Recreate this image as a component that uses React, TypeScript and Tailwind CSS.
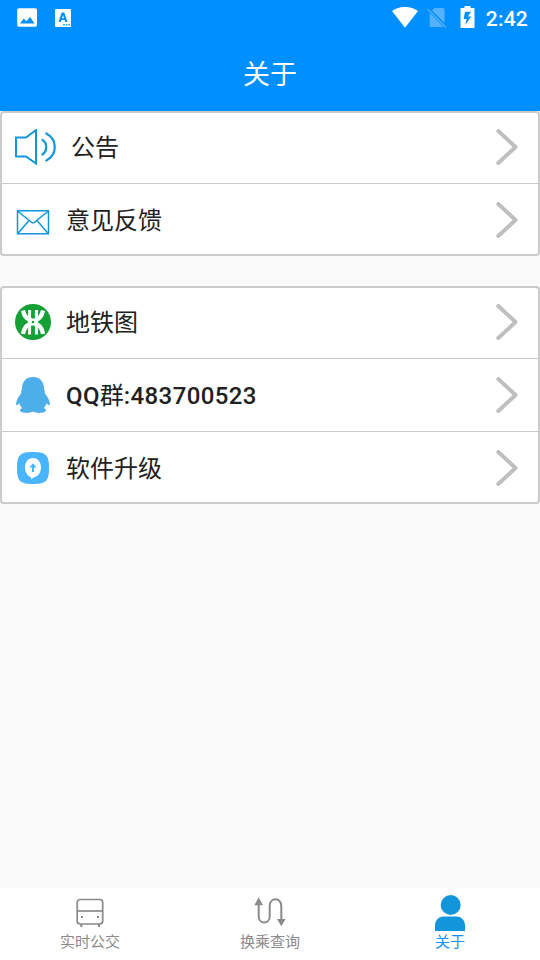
import type { ReactNode } from 'react';

function StatusBar() {
  return (
    <div className="flex h-9 items-center justify-between pr-3 pl-4 text-white">
      <div className="flex items-center gap-3.5">
        <svg className="size-[22px]" viewBox="0 0 22 22" fill="currentColor">
          <path
            fillRule="evenodd"
            d="M3 1.3h16.2a1.8 1.8 0 0 1 1.8 1.8v14.8a1.8 1.8 0 0 1-1.8 1.8H3a1.8 1.8 0 0 1-1.8-1.8V3.1A1.8 1.8 0 0 1 3 1.3ZM4 16.5h14.5l-4.5-6.6-3.6 4.4-2.6-2.8Z"
          />
        </svg>
        <svg className="size-[22px]" viewBox="0 0 22 22" fill="currentColor">
          <path
            fillRule="evenodd"
            d="M4 2h14a1 1 0 0 1 1 1v16a1 1 0 0 1-1 1H4a1 1 0 0 1-1-1V3a1 1 0 0 1 1-1ZM9.700 5.500 6.500 15h2.300l.6-1.900h3.200l.6 1.900h2.300l-3.200-9.500Zm1.300 2.600 1 3.200h-2ZM11.200 17h1.500v1.400h-1.500Zm2.700 0h1.400v1.400h-1.400Zm2.500 0h1.400v1.400h-1.400Z"
          />
        </svg>
      </div>
      <div className="flex items-center">
        <svg className="h-[22px] w-[26px]" viewBox="0 0 26 22" fill="currentColor">
          <path d="M13 20.800 0 4.100C7.500-1.500 18.500-1.500 26 4.100Z" />
        </svg>
        <svg className="ml-[9px] mb-0.5 h-[22px] w-5" viewBox="0 0 20 22">
          <path d="M7.500 2H16a1.500 1.500 0 0 1 1.500 1.500V17L5 4.500ZM2.700 7 16.500 21H2.700Z" fill="#55b0ff" />
          <path d="m.5 3 18.500 18.500" stroke="#55b0ff" strokeWidth="1.500" />
        </svg>
        <svg className="ml-[13px] mb-0.5 h-[22px] w-[15px]" viewBox="0 0 15 22" fill="currentColor">
          <path fillRule="evenodd" d="M4.500 0h6v2h3.200q.8 0 .8.8v18.400q0 .8-.8.8H1.300q-.8 0-.8-.8V2.800q0-.8.8-.8h3.200ZM5 5.700 3.600 13h3L5.200 19l6-8.500H8l3-4.800Z" />
        </svg>
        <span className="ml-[11px] pt-0.5 text-[21px] leading-[34px] font-medium tracking-[0.2px]">2:42</span>
      </div>
    </div>
  );
}

function SpeakerIcon() {
  return (
    <svg className="h-9 w-[41px]" viewBox="0 0 41 36" fill="none" stroke="#1296db" strokeWidth="2">
      <path d="M1 8.500h10L21 1v33.500l-10-7H1Z" />
      <path d="M27.500 11c5 3 5 11 0 14.500M31.300 4.500c11.300 6 11.300 21 0 27" strokeWidth="2.200" strokeLinecap="round" />
    </svg>
  );
}

function MailIcon() {
  return (
    <svg className="size-9" viewBox="0 0 36 36" fill="none" stroke="#1296db" strokeWidth="1.500">
      <path d="M2.500 8.700h31v23h-31Z" />
      <path d="m2.500 9 12.500 10c2 2.500 4 2.500 6 0l12.500-10M14 18.500l-11 12.700M22 18.500l11 12.700" />
    </svg>
  );
}

function MetroIcon() {
  return (
    <svg className="size-9" viewBox="0 0 36 36" fill="none" stroke="#fff">
      <circle cx="18" cy="18" r="18" fill="#15a035" stroke="none" />
      <path d="M8 6.500C9 12 12 16 18 16.800c6-.8 9-4.800 10-10.300M8 30C9 24 12 20 18 19.200c6 .8 9 4.800 10 10.800" strokeWidth="4.200" />
      <path d="M14.600 6v24.500M21.400 6v24.500" strokeWidth="3" />
      <path d="M18 16v4" strokeWidth="9" />
      <circle cx="18" cy="18" r="1.300" fill="#15a035" stroke="none" />
      <path d="M18 6v8M18 22v8.500" stroke="#15a035" strokeWidth="2.200" />
    </svg>
  );
}

function QQIcon() {
  return (
    <svg className="size-9" viewBox="0 0 36 36" fill="#4daeea">
      <path d="M18 0C11 0 7 4.800 7 11.500c0 1-.8 1.700-.8 3 0 .8.1 1.200.2 1.500C3.300 19.800.7 24.300 1.200 27.500c.4 1.500 1.800.2 3-1.300.7 1.700 1.600 3.500 3.100 4.900-1.800.6-2.500 1.500-2.300 2.500.4 2.800 9.700 3 13 1 3.300 2 12.600 1.800 13-1 .2-1-.5-1.900-2.300-2.500 1.500-1.400 2.400-3.200 3.100-4.900 1.200 1.500 2.600 2.800 3 1.300.5-3.200-2.100-7.700-5.200-11.500.1-.3.2-.7.200-1.500 0-1.300-.8-2-.8-3C29 4.800 25 0 18 0Z" />
    </svg>
  );
}

function UpgradeIcon() {
  return (
    <svg className="size-9" viewBox="0 0 36 36" fill="none">
      <path d="M18 2c13 0 16 3 16 16s-3 16-16 16S2 31 2 18 5 2 18 2Z" fill="#49b5fe" />
      <path d="M18 8c-4.800 0-8 4.200-8 9.500 0 4.800 2.600 8.700 6.300 9.700l-.3 2.300 3-2.300c4.100-.7 7-4.700 7-9.700C26 12.200 22.800 8 18 8Z" fill="#fff" />
      <path d="M18 14.500v7.500" stroke="#49b5fe" strokeWidth="2" />
      <path d="m18 13.300 3.600 4.300h-7.200Z" fill="#49b5fe" />
    </svg>
  );
}

function Chevron() {
  return (
    <svg className="h-9 w-[22px]" viewBox="0 0 22 36" fill="none" stroke="#bfbfbf" strokeWidth="4" strokeLinecap="round" strokeLinejoin="round">
      <path d="m2.300 2 17.200 16L2.300 34" />
    </svg>
  );
}

function Row({ icon, children, className }: { icon: ReactNode; children: ReactNode; className: string }) {
  return (
    <button className={`flex w-full items-center border-[#c9c9c9] pr-5 pl-[13px] text-left ${className}`}>
      {icon}
      <span className="ml-[15px] flex-1 pt-0.5 text-2xl leading-9">{children}</span>
      <Chevron />
    </button>
  );
}

function BusIcon() {
  return (
    <svg className="h-9 w-9" viewBox="0 0 36 36" fill="none" stroke="#8a8a8a" strokeWidth="1.700">
      <rect x="5.200" y="4.500" width="25.500" height="24.500" rx="3" />
      <path d="M5 16h25.500" />
      <path d="M9.300 29v3M27 29v3" strokeWidth="2" />
      <path d="M9 22h2M25 22h2" strokeWidth="2" />
    </svg>
  );
}

function TransferIcon() {
  return (
    <svg className="h-9 w-9" viewBox="0 0 36 36" fill="none">
      <path d="M6.700 10v11.500c0 8 11 8 11 0V11c0-9 11.600-9 11.600 0v13" stroke="#8a8a8a" strokeWidth="2" />
      <path d="m6.700 2.300 4.300 8H2.300ZM29.300 31.300l4.300-7.300H25Z" fill="#8a8a8a" />
    </svg>
  );
}

function UserIcon() {
  return (
    <svg className="h-9 w-9" viewBox="0 0 36 36" fill="#1296db">
      <circle cx="18.700" cy="10" r="10" />
      <path d="M3 36v-5.500c0-5 3.500-9 8.500-9h13c5 0 8.500 4 8.500 9V36Z" />
    </svg>
  );
}

function Tab({ icon, label, active }: { icon: ReactNode; label: string; active?: boolean }) {
  return (
    <button className={`flex flex-1 flex-col items-center pt-[7px] text-[15px] leading-[22px] ${active ? 'text-[#1190f8]' : 'text-[#8a8a8a]'}`}>
      {icon}
      {label}
    </button>
  );
}

export default function App() {
  return (
    <div className="flex h-screen flex-col bg-[#fafafa] font-[Roboto,'Noto_Sans_CJK_SC',sans-serif] text-[#212121]">
      <header className="h-[111px] bg-[#008fff]">
        <StatusBar />
        <h1 className="pt-0.5 text-center text-[27px] leading-[75px] font-normal text-white">关于</h1>
      </header>

      <main className="flex flex-1 flex-col gap-[30px]">
        <section className="rounded border-2 border-[#cbcbcb] bg-white">
          <Row icon={<SpeakerIcon />} className="h-[71px] border-b pb-0.5">公告</Row>
          <Row icon={<MailIcon />} className="h-[70px] pt-0.5">意见反馈</Row>
        </section>

        <section className="rounded border-2 border-[#cbcbcb] bg-white">
          <Row icon={<MetroIcon />} className="h-[71px] border-b pb-0.5">地铁图</Row>
          <Row icon={<QQIcon />} className="h-[73px] border-b">
            <span className="font-medium tracking-[0.35px]">QQ</span>群
            <span className="font-medium tracking-[0.4px]">:483700523</span>
          </Row>
          <Row icon={<UpgradeIcon />} className="h-[70px] pt-0.5">软件升级</Row>
        </section>
      </main>

      <nav className="flex h-[72px] bg-white">
        <Tab icon={<BusIcon />} label="实时公交" />
        <Tab icon={<TransferIcon />} label="换乘查询" />
        <Tab icon={<UserIcon />} label="关于" active />
      </nav>
    </div>
  );
}
